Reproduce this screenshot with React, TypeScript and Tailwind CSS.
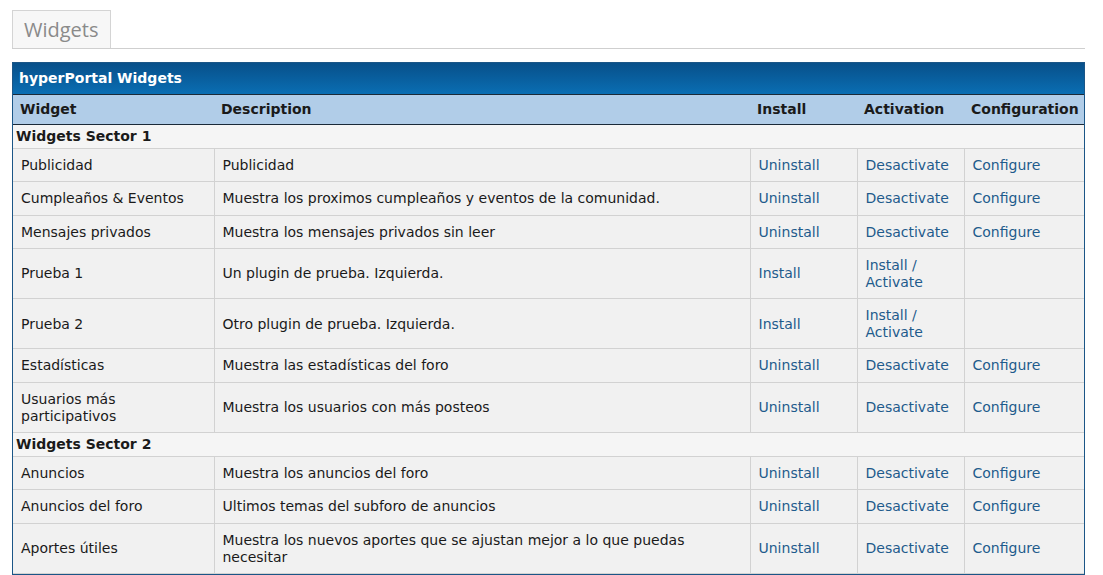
import React from 'react';

type Row = {
  name: string;
  desc: string;
  install: string;
  activation: string;
  config?: string;
};

type Sector = { title: string; rows: Row[] };

const full = { install: 'Uninstall', activation: 'Desactivate', config: 'Configure' };
const pending = { install: 'Install', activation: 'Install / Activate' };

const sectores: Sector[] = [
  {
    title: 'Widgets Sector 1',
    rows: [
      { name: 'Publicidad', desc: 'Publicidad', ...full },
      { name: 'Cumpleaños & Eventos', desc: 'Muestra los proximos cumpleaños y eventos de la comunidad.', ...full },
      { name: 'Mensajes privados', desc: 'Muestra los mensajes privados sin leer', ...full },
      { name: 'Prueba 1', desc: 'Un plugin de prueba. Izquierda.', ...pending },
      { name: 'Prueba 2', desc: 'Otro plugin de prueba. Izquierda.', ...pending },
      { name: 'Estadísticas', desc: 'Muestra las estadísticas del foro', ...full },
      { name: 'Usuarios más participativos', desc: 'Muestra los usuarios con más posteos', ...full },
    ],
  },
  {
    title: 'Widgets Sector 2',
    rows: [
      { name: 'Anuncios', desc: 'Muestra los anuncios del foro', ...full },
      { name: 'Anuncios del foro', desc: 'Ultimos temas del subforo de anuncios', ...full },
      {
        name: 'Aportes útiles',
        desc: 'Muestra los nuevos aportes que se ajustan mejor a lo que puedas necesitar',
        ...full,
      },
    ],
  },
];

const celda = 'border border-[#d2d2d2] bg-[#f1f1f1] pt-2 pb-[7.3px] pl-2 pr-2 align-middle';
const enlace = 'text-[#1e5b8c] hover:underline cursor-pointer';

export default function App() {
  return (
    <div className="min-h-screen bg-white text-[14px] leading-[17px] text-[#1a1a1a] font-['DejaVu_Sans',Verdana,sans-serif]">
      <div className="px-3 pt-[10px]">
        {/* Pestaña */}
        <div className="flex border-b border-[#cfcfcf] mr-[6px]">
          <div className="border border-b-0 border-[#d4d4d4] bg-[#f7f7f7] px-[11px] h-[38px] flex items-center text-[20px] text-[#8a8a8a] font-['Open_Sans',sans-serif]">
            Widgets
          </div>
        </div>

        {/* Tabla de widgets */}
        <div className="mt-[13px] mr-[6px] border border-[#1b5687]">
          <div className="h-[31px] flex items-center px-[6px] bg-gradient-to-b from-[#08508a] to-[#0a6eb3] text-white font-bold">
            hyperPortal Widgets
          </div>
          <table className="w-full border-collapse table-fixed">
            <colgroup>
              <col className="w-[201px]" />
              <col className="w-[536px]" />
              <col className="w-[107px]" />
              <col className="w-[107px]" />
              <col />
            </colgroup>
            <thead>
              <tr className="bg-[#b1cde8] h-[30px] border-t border-b border-[#1b2a38] font-bold text-left">
                <th className="pl-[7px] font-bold">Widget</th>
                <th className="pl-[7px] font-bold">Description</th>
                <th className="pl-[7px] font-bold">Install</th>
                <th className="pl-[7px] font-bold">Activation</th>
                <th className="pl-[7px] font-bold">Configuration</th>
              </tr>
            </thead>
            <tbody>
              {sectores.map((s) => (
                <React.Fragment key={s.title}>
                  <tr className="h-[24px] bg-[#f5f5f5] border-b border-[#d2d2d2]">
                    <td colSpan={5} className="pl-[3px] font-bold align-middle">
                      {s.title}
                    </td>
                  </tr>
                  {s.rows.map((r) => (
                    <tr key={r.name}>
                      <td className={celda + ' border-l-0'}>{r.name}</td>
                      <td className={celda}>{r.desc}</td>
                      <td className={celda}>
                        <span className={enlace}>{r.install}</span>
                      </td>
                      <td className={celda}>
                        <span className={enlace}>{r.activation}</span>
                      </td>
                      <td className={celda + ' border-r-0'}>
                        {r.config && <span className={enlace}>{r.config}</span>}
                      </td>
                    </tr>
                  ))}
                </React.Fragment>
              ))}
            </tbody>
          </table>
        </div>
      </div>
    </div>
  );
}
